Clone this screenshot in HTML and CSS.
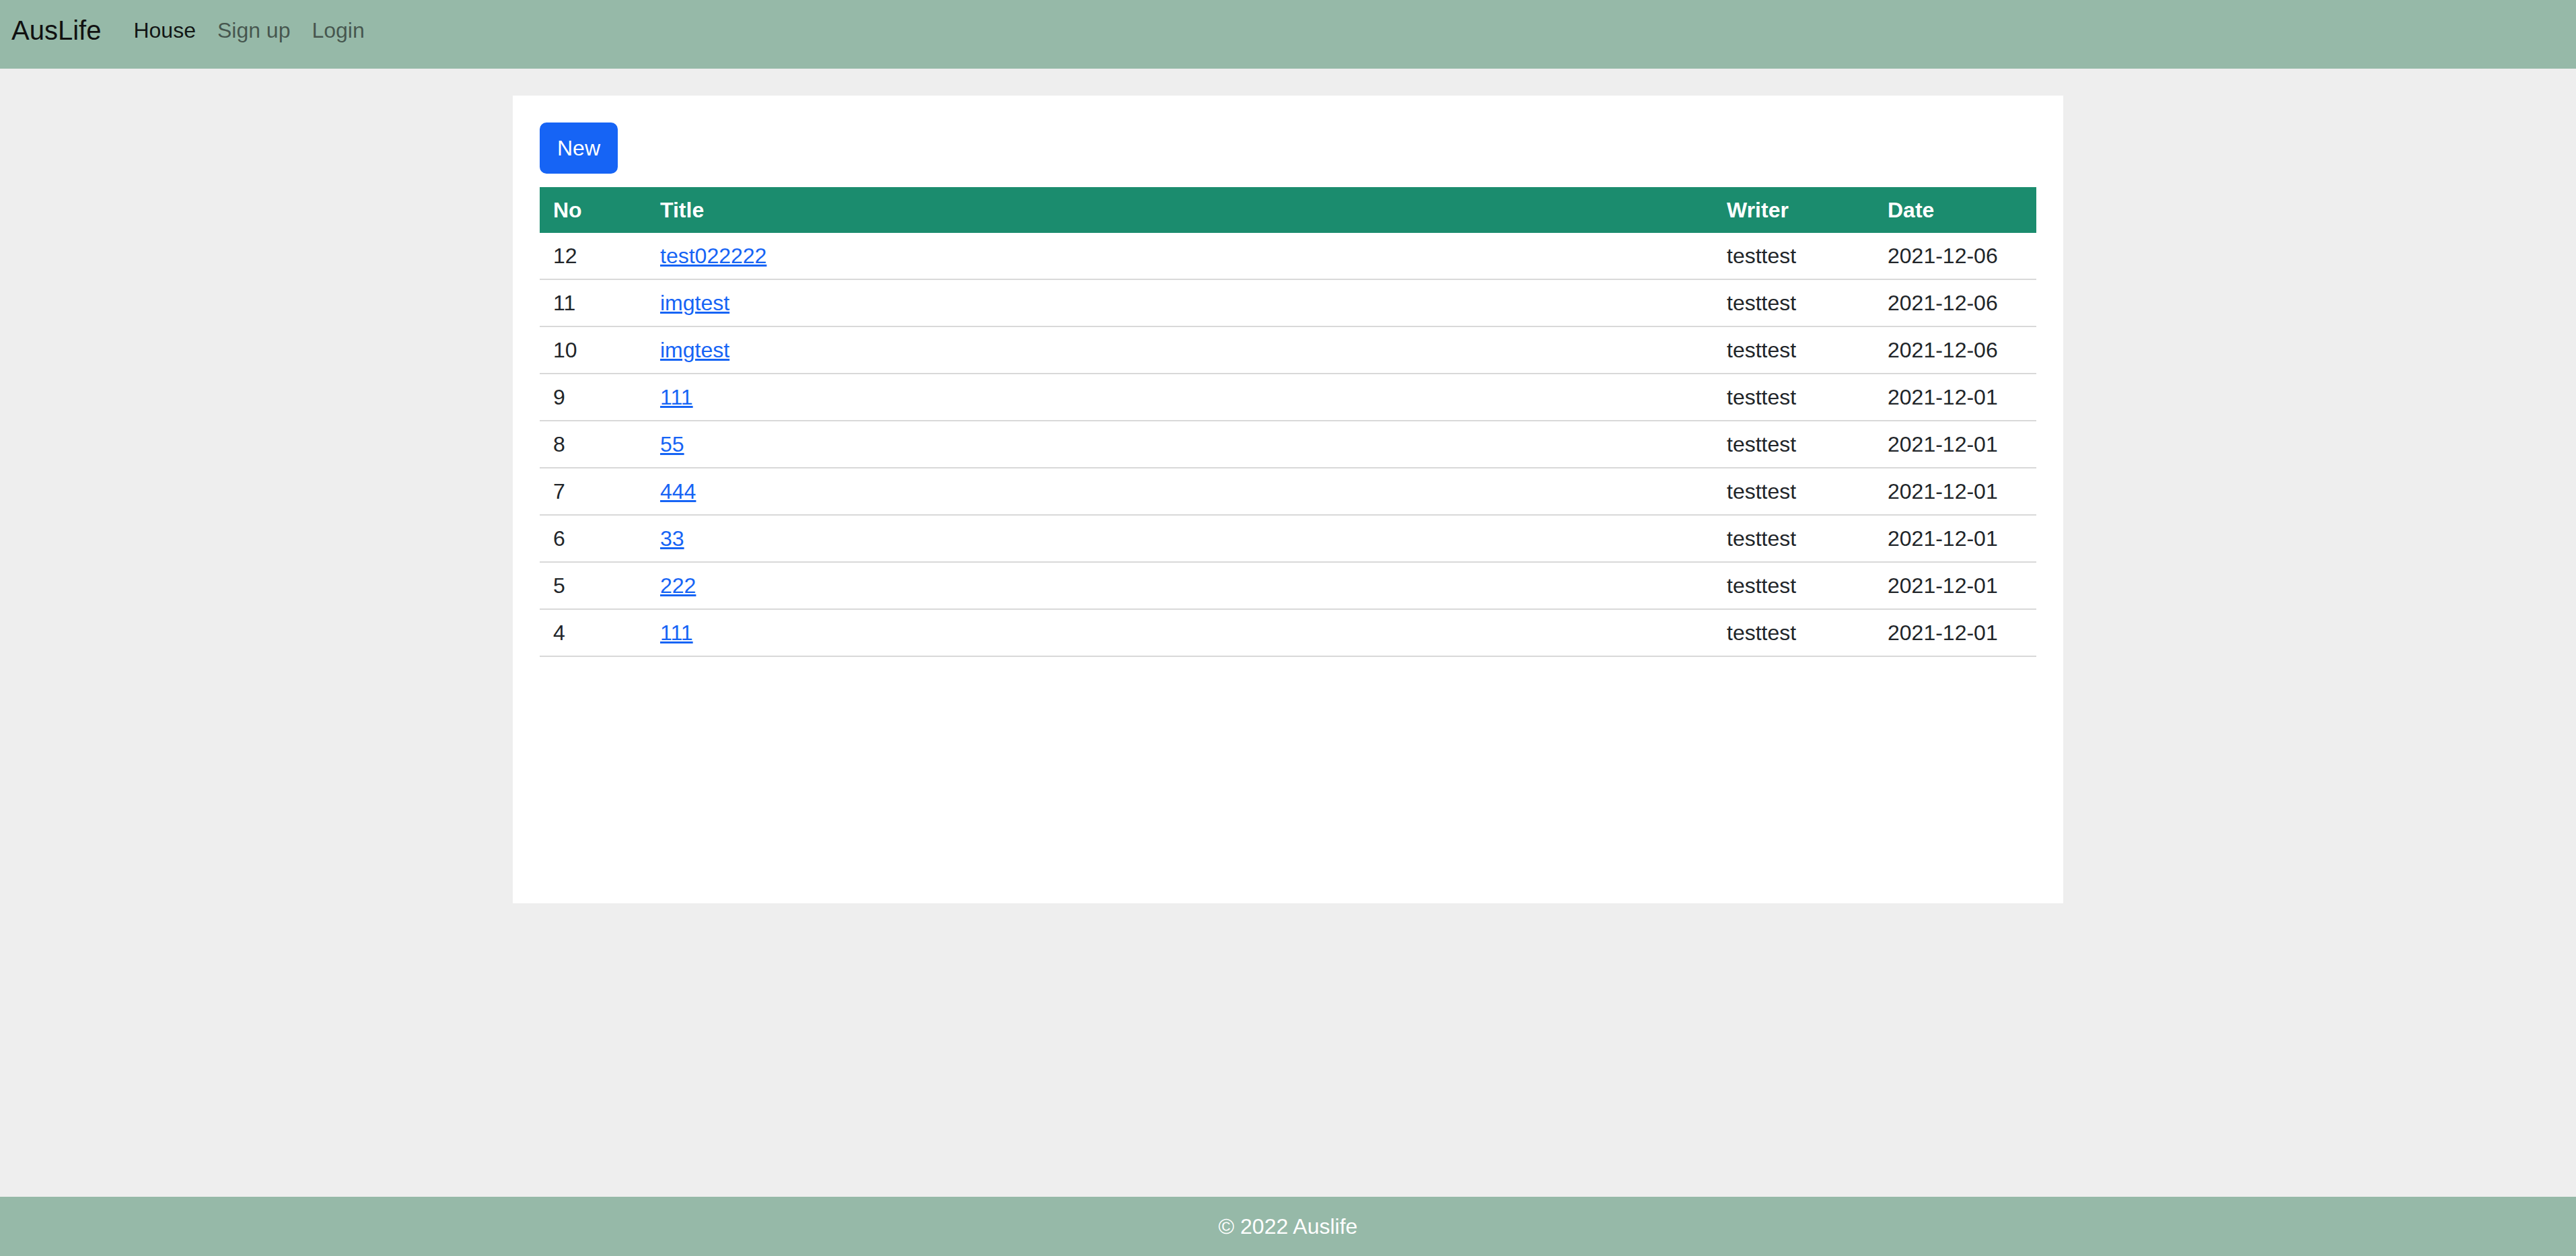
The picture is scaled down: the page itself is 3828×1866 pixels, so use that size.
FILE: index.html
```html
<!DOCTYPE html>
<html lang="en">
<head>
<meta charset="utf-8">
<title>AusLife - House</title>
<link rel="stylesheet" href="styles.css">
</head>
<body>
<nav class="navbar">
  <a class="brand" href="#">AusLife</a>
  <ul class="nav">
    <li><a class="nav-link active" href="#">House</a></li>
    <li><a class="nav-link" href="#">Sign up</a></li>
    <li><a class="nav-link" href="#">Login</a></li>
  </ul>
</nav>
<main class="main">
  <section class="card">
    <button class="btn-new" type="button">New</button>
    <table class="board">
      <thead>
        <tr>
          <th class="col-no">No</th>
          <th class="col-title">Title</th>
          <th class="col-writer">Writer</th>
          <th class="col-date">Date</th>
        </tr>
      </thead>
      <tbody>
        <tr><td>12</td><td><a href="#">test022222</a></td><td>testtest</td><td>2021-12-06</td></tr>
        <tr><td>11</td><td><a href="#">imgtest</a></td><td>testtest</td><td>2021-12-06</td></tr>
        <tr><td>10</td><td><a href="#">imgtest</a></td><td>testtest</td><td>2021-12-06</td></tr>
        <tr><td>9</td><td><a href="#">111</a></td><td>testtest</td><td>2021-12-01</td></tr>
        <tr><td>8</td><td><a href="#">55</a></td><td>testtest</td><td>2021-12-01</td></tr>
        <tr><td>7</td><td><a href="#">444</a></td><td>testtest</td><td>2021-12-01</td></tr>
        <tr><td>6</td><td><a href="#">33</a></td><td>testtest</td><td>2021-12-01</td></tr>
        <tr><td>5</td><td><a href="#">222</a></td><td>testtest</td><td>2021-12-01</td></tr>
        <tr><td>4</td><td><a href="#">111</a></td><td>testtest</td><td>2021-12-01</td></tr>
      </tbody>
    </table>
  </section>
</main>
<footer class="footer">© 2022 Auslife</footer>
</body>
</html>
```
FILE: styles.css
```css
* { box-sizing: border-box; }
html, body { margin: 0; padding: 0; }
body {
  font-family: "Liberation Sans", Arial, Helvetica, sans-serif;
  font-size: 32px;
  line-height: 48px;
  color: #212529;
  background: #eeeeee;
  min-height: 100vh;
  display: flex;
  flex-direction: column;
}
.navbar {
  height: 102px;
  background: #96b9a8;
  display: flex;
  align-items: center;
  padding: 0 16px 12px 16px;
}
.brand {
  font-size: 40px;
  line-height: 48px;
  color: #111;
  text-decoration: none;
  margin-right: 32px;
  margin-left: 1px;
}
.nav {
  list-style: none;
  margin: 0;
  padding: 0;
  display: flex;
}
.nav-link {
  display: block;
  padding: 0 16px;
  font-size: 32px;
  line-height: 48px;
  color: rgba(0, 0, 0, 0.55);
  text-decoration: none;
}
.nav-link.active { color: rgba(0, 0, 0, 0.9); }
.main {
  flex: 1;
  padding-top: 40px;
}
.card {
  width: 2304px;
  min-height: 1200px;
  margin: 0 auto;
  background: #ffffff;
  padding: 40px;
}
.btn-new {
  font-family: inherit;
  font-size: 32px;
  line-height: 48px;
  color: #ffffff;
  background: #1664f5;
  border: 2px solid #1664f5;
  border-radius: 10px;
  padding: 12px 24px;
  cursor: pointer;
  display: block;
}
.board {
  margin-top: 20px;
  width: 100%;
  border-collapse: collapse;
  table-layout: fixed;
}
.board th {
  background: #1b8c6e;
  color: #ffffff;
  font-weight: bold;
  text-align: left;
  padding: 10px 20px;
}
.board td {
  padding: 10px 20px;
  border-bottom: 2px solid #d9d9d9;
}
.board a { color: #1664f5; text-decoration: underline; }
.col-no { width: 159px; }
.col-writer { width: 239px; }
.col-date { width: 241px; }
.footer {
  height: 88px;
  background: #96b9a8;
  color: #ffffff;
  text-align: center;
  display: flex;
  align-items: center;
  justify-content: center;
  font-size: 32px;
}
```
